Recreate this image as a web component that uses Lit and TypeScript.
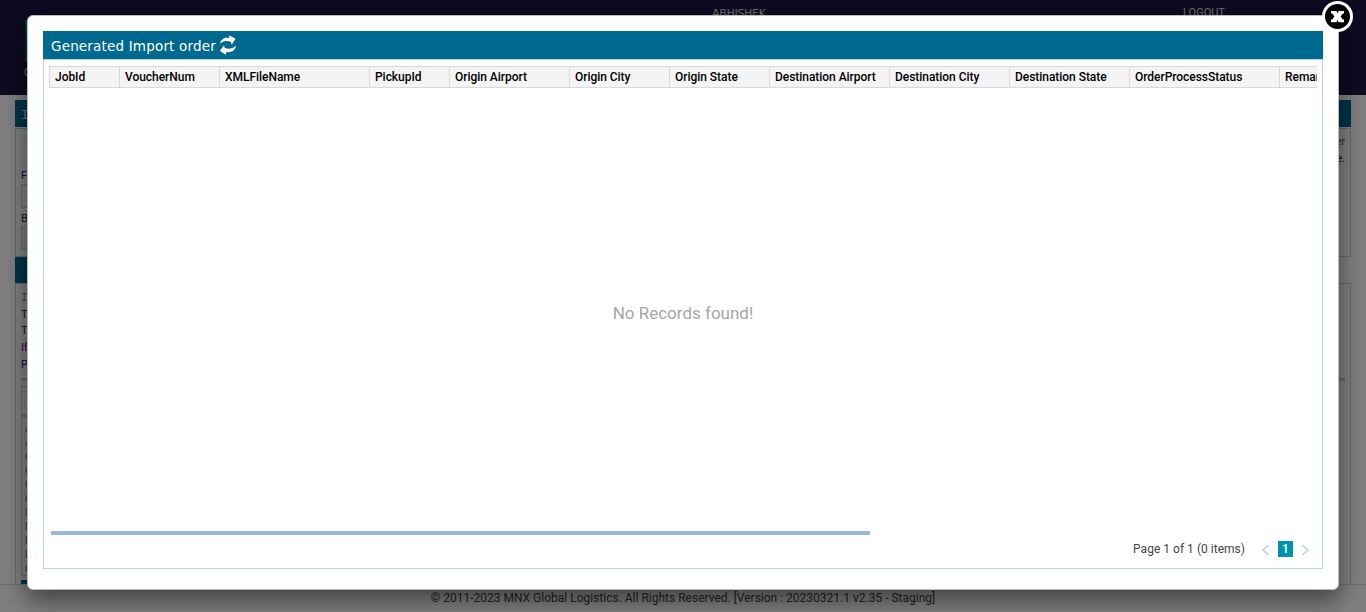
import { LitElement, html, css } from "lit";
import { customElement } from "lit/decorators.js";
import { styleMap } from "lit/directives/style-map.js";

const COLUMNS: [string, number][] = [
  ["JobId", 70],
  ["VoucherNum", 100],
  ["XMLFileName", 150],
  ["PickupId", 80],
  ["Origin Airport", 120],
  ["Origin City", 100],
  ["Origin State", 100],
  ["Destination Airport", 120],
  ["Destination City", 120],
  ["Destination State", 120],
  ["OrderProcessStatus", 150],
  ["Remarks", 150],
];

@customElement("page-backdrop")
export class PageBackdrop extends LitElement {
  static styles = css`
    :host { display: flex; flex-direction: column; height: 612px; background: #fff; color: #3d0a63; font: 11px/17px Roboto, sans-serif; }
    .top { height: 95px; background: #1c1440; display: flex; flex: none; color: #ddd; position: relative; }
    .logo { margin: 19px 0 0 25px; width: 40px; flex: none; }
    .mark { display: block; height: 43px; width: 40px; }
    .tag { font-size: 10px; line-height: 12px; margin-top: 5px; margin-left: -1px; display: block; }
    .user { margin: 7px 0 0 647px; font: 11px/14px "DejaVu Sans", sans-serif; letter-spacing: -0.3px; width: 471px; flex: none; }
    .out { margin-top: 5px; line-height: 15px; font-size: 11px; }
    .main { flex: none; height: 489px; box-sizing: border-box; padding: 5px 15px 0; overflow: hidden; }
    .bar { height: 27px; background: #006990; color: #ddd; font: 13px/30px "DejaVu Sans Mono", monospace; padding-left: 6px; margin-bottom: 1px; }
    .panel { border: 1px solid #b0dadf; box-sizing: border-box; padding: 0 5px; }
    .form { height: 129px; display: flex; justify-content: space-between; }
    .fields { width: 200px; padding-top: 38px; }
    .field { height: 17px; }
    .field.low { line-height: 19px; }
    .input { height: 22px; border: 1px solid #b0dadf; margin-bottom: 1px; }
    .input.grey { background: #f0f0f0; }
    .note { text-align: right; padding-top: 4px; color: #555; }
    .note b { display: block; font-weight: 400; color: #3d0a63; }
    .tab { width: 140px; height: 26px; background: #006990; }
    .list { height: 310px; padding-top: 6px; line-height: 16.7px; }
    .intro { color: #b58b60; font-family: "DejaVu Sans Mono", monospace; }
    .rule { height: 3px; background: #d0d0d0; margin: 4px 0 5px; }
    .table { width: 800px; height: 190px; border: 1px solid #b0dadf; box-sizing: border-box; line-height: 14px; color: #777; }
    .head { height: 27px; border-bottom: 3px solid #ccc; margin-bottom: 5px; }
    .row { padding-left: 3px; font-size: 11px; }
    .btn { width: 90px; height: 20px; background: #006990; margin-top: 4px; }
    .foot { flex: 1; border-top: 1px solid #d8d8e0; text-align: center; font-size: 12px; line-height: 26px; color: #444; }
    .copy { letter-spacing: 0; }
  `;
  render() {
    return html`
      <div class="top">
        <div class="logo">
          <svg class="mark" viewBox="0 0 40 43"><path d="M0 0 L12 14 V43 H0.5 V8Z" fill="#00877f" /></svg>
          <span class="tag">G</span>
        </div>
        <div class="user">ABHISHEK</div>
        <div class="out">LOGOUT</div>
      </div>
      <div class="main">
        <div class="bar">I</div>
        <div class="panel form">
          <div class="fields">
            <div class="field">F</div><div class="input"></div>
            <div class="field low">B</div><div class="input grey"></div>
          </div>
          <div class="note">er<b>e.</b></div>
        </div>
        <div class="tab"></div>
        <div class="panel list">
          <div class="intro">In</div>
          <div>T</div><div>T</div><div>If</div><div>P</div>
          <div class="rule"></div>
          <div class="table">
            <div class="head"></div>
            ${["A", "A", "C", "C", "C", "C", "D", "D", "D", "D", "C"].map((t) => html`<div class="row">${t}</div>`)}
          </div>
          <div class="btn"></div>
        </div>
      </div>
      <div class="foot"><span class="copy">© 2011-2023 MNX Global Logistics. All Rights Reserved. [Version : 20230321.1 v2.35 - Staging]</span></div>
    `;
  }
}

@customElement("order-dialog")
export class OrderDialog extends LitElement {
  static styles = css`
    :host { display: flex; flex-direction: column; position: relative; box-sizing: border-box; width: 1312px; height: 575px; padding: 15px 15px 20px; background: #fff; border: 1px solid #bbb; border-radius: 6px; box-shadow: 0 10px 25px rgba(0, 0, 0, 0.5); font-family: Roboto, sans-serif; }
    .close { position: absolute; right: -16px; top: -16px; width: 33px; height: 33px; }
    .title { flex: none; height: 28px; background: #006990; color: #fff; display: flex; padding-left: 8px; font: 13.5px/30px "DejaVu Sans", sans-serif; }
    .name { width: 168px; white-space: nowrap; letter-spacing: 0.18px; }
    .refresh { width: 18px; height: 22px; margin-top: 3px; }
    .body { flex: 1; box-sizing: border-box; border: 1px solid #b0dadf; padding: 6px 5px 0; display: flex; flex-direction: column; }
    .cols { display: flex; flex: none; height: 22px; box-sizing: border-box; overflow: hidden; border: 1px solid #d9d9d9; border-right: 0; background: #f4f4f4; }
    .col { flex: none; box-sizing: border-box; border-right: 1px solid #d9d9d9; padding-left: 5px; font-size: 12px; line-height: 20px; font-weight: 500; letter-spacing: -0.04px; color: #000; white-space: nowrap; }
    .empty { height: 443px; flex: none; display: flex; align-items: center; justify-content: center; font-size: 17px; color: #a6a6a6; padding-top: 6px; box-sizing: border-box; }
    .scroll { width: 819px; height: 4px; margin-left: 2px; background: #9ab9da; flex: none; }
    .pager { display: flex; margin-top: 5px; padding-right: 7px; justify-content: flex-end; align-items: center; font-size: 12px; line-height: 18px; color: #444; }
    .count { margin-right: 16px; letter-spacing: 0.02px; }
    .arrow { width: 9px; height: 12px; margin-top: 2px; }
    .num { width: 15px; height: 16px; margin: 0 8px; background: #0093ad; color: #fff; font-weight: 500; line-height: 16px; text-align: center; }
  `;
  render() {
    return html`
      <div class="title">
        <span class="name">Generated Import order</span>
        <svg class="refresh" viewBox="0 0 18 22" fill="#fff">
          <path d="M1 9.5 C2 5 6 3 10.5 4 L10 1.2 L16.6 4.8 L12.6 10.8 L12 8 C8 6.3 4.5 6.8 1 9.5Z" />
          <path d="M17 11.5 C16.5 16.5 12 19 7 18 L7 20.8 L.8 17 L5 11.2 L5.8 14 C10 15.6 13.5 14.8 17 11.5Z" />
        </svg>
      </div>
      <div class="body">
        <div class="cols">${COLUMNS.map(([t, w]) => html`<div class="col" style=${styleMap({ width: w + "px" })}>${t}</div>`)}</div>
        <div class="empty">No Records found!</div>
        <div class="scroll"></div>
        <div class="pager">
          <span class="count">Page 1 of 1 (0 items)</span>
          <svg class="arrow" viewBox="0 0 9 12" fill="none" stroke="#b9cfe6" stroke-width="1.5"><path d="M7.5 1 L2 6 L7.5 11" /></svg>
          <span class="num">1</span>
          <svg class="arrow" viewBox="0 0 9 12" fill="none" stroke="#b9cfe6" stroke-width="1.5"><path d="M1.5 1 L7 6 L1.5 11" /></svg>
        </div>
      </div>
      <svg class="close" viewBox="0 0 33 33">
        <circle cx="16.5" cy="16.5" r="15.5" fill="#fff" />
        <circle cx="16.5" cy="16.5" r="12.5" fill="#000" />
        <path d="M10 11 H15.4 L16.5 13.2 L17.6 11 H23 V13.6 H21.8 L19.6 16.5 L21.8 19.6 H23 V22.2 H17.6 L16.5 20 L15.4 22.2 H10 V19.6 H11.2 L13.4 16.5 L11.2 13.6 H10Z" fill="#fff" />
      </svg>
    `;
  }
}

@customElement("app-root")
export class AppRoot extends LitElement {
  static styles = css`
    :host { display: block; position: relative; width: 1366px; height: 612px; overflow: hidden; }
    .overlay { position: absolute; inset: 0; background: rgba(0, 0, 0, 0.5); padding: 15px 0 0 27px; }
  `;
  render() {
    return html`<page-backdrop></page-backdrop><div class="overlay"><order-dialog></order-dialog></div>`;
  }
}
